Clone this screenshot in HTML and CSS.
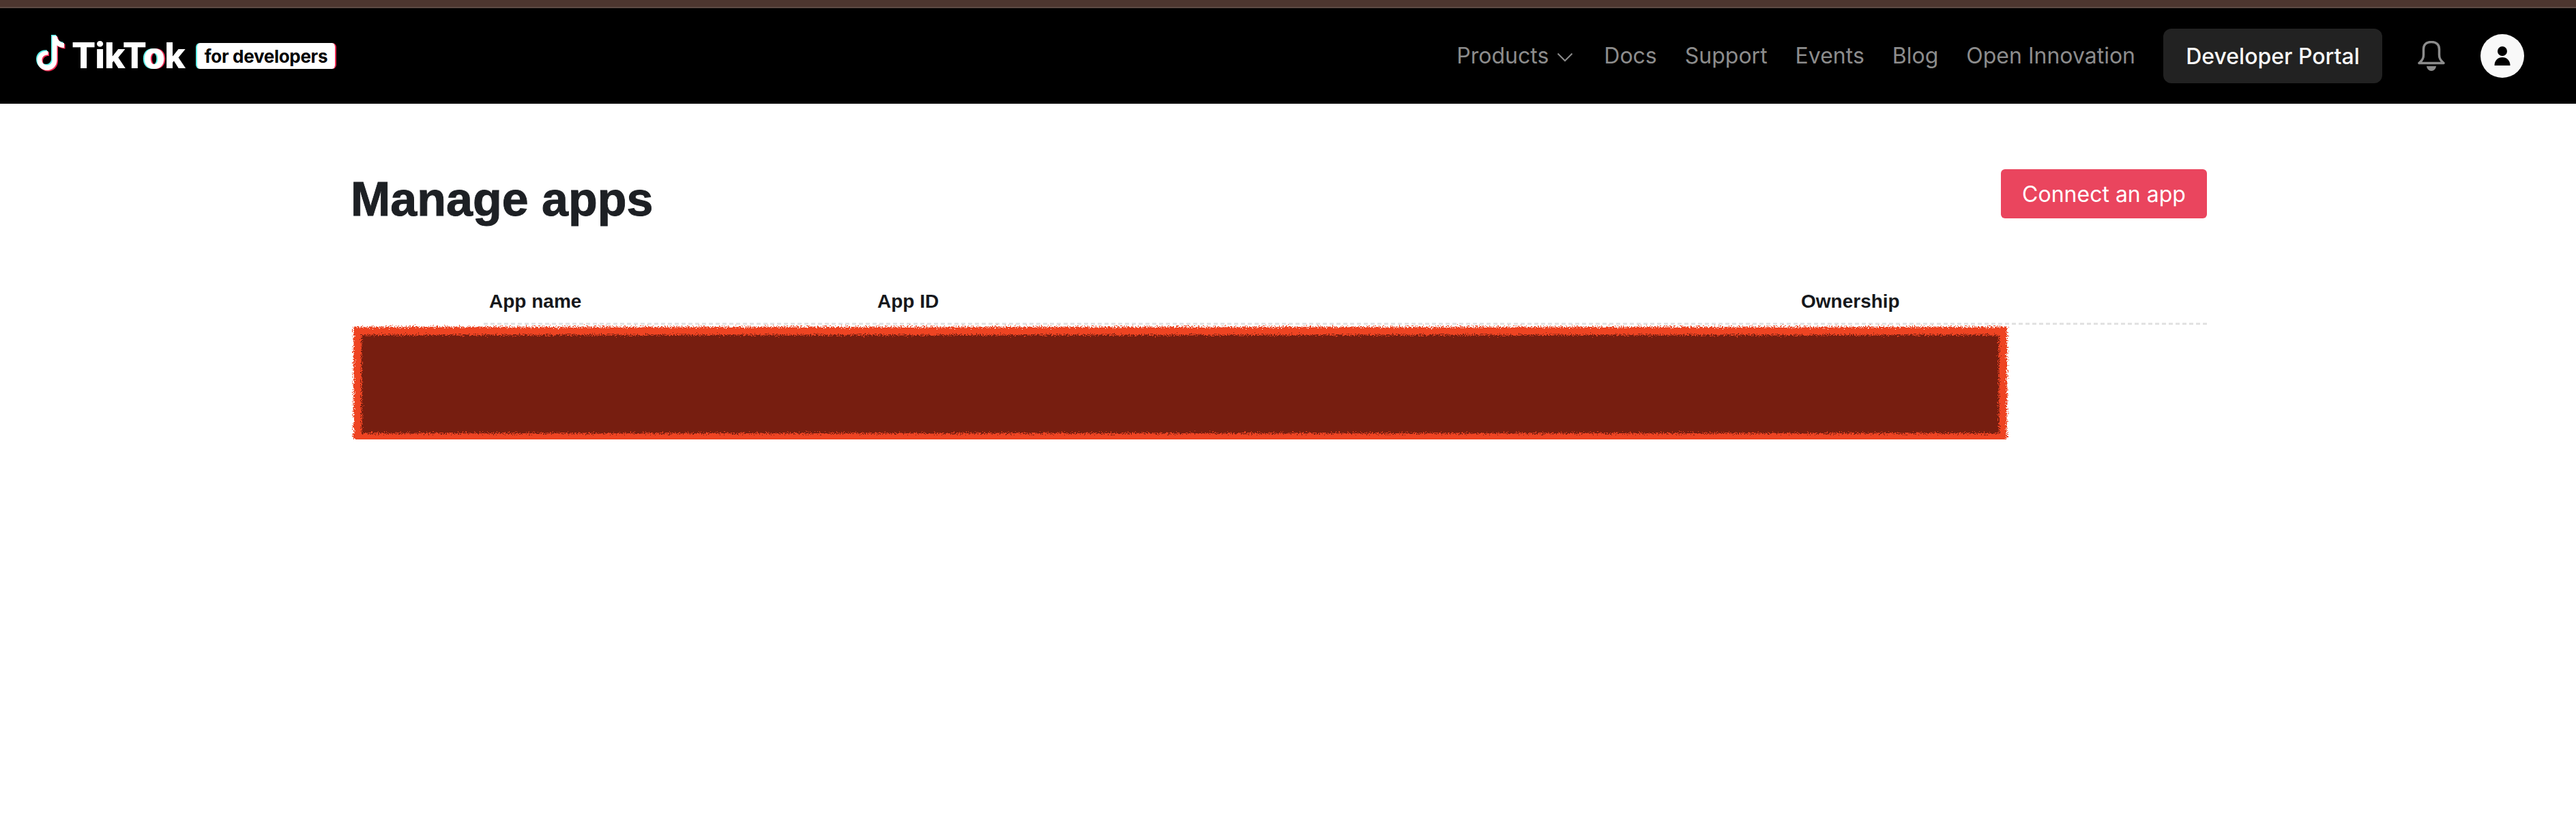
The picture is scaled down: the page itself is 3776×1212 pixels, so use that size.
FILE: index.html
```html
<!DOCTYPE html>
<html lang="en">
<head>
    <meta charset="UTF-8">
    <meta name="viewport" content="width=device-width, initial-scale=1.0">
    <title>Manage apps | TikTok for Developers</title>
    <link rel="stylesheet" href="styles.css">
</head>
<body>

    <div class="top-strip"></div>

    <header class="site-header">
        <a class="logo" href="#">
            <svg class="logo-note" viewBox="0 0 48 56" width="48" height="56">
                <path class="note-cyan" d="M19 22.500v5.500c-4-.6-9 1.800-9 7.500 0 4.500 3.500 7.500 7.500 7.500 4.500 0 7.500-3.500 7.500-7.500V0h7c.5 6 4.500 10 10.500 10.500v7c-4 0-7.500-1.200-10.500-3.500v21.500C32 44 25.500 50.500 17.500 50.500 9 50.500 3 44 3 35.500 3 27 10.500 21 19 22.500z"/>
                <path class="note-red" d="M22 25.500v5.500c-4-.6-9 1.800-9 7.500 0 4.500 3.500 7.500 7.500 7.500 4.500 0 7.500-3.500 7.500-7.500V3h7c.5 6 4.500 10 10.500 10.500v7c-4 0-7.500-1.200-10.500-3.500v21.500C35 47 28.500 53.500 20.500 53.500 12 53.500 6 47 6 38.500 6 30 13.500 24 22 25.500z"/>
                <path class="note-white" d="M20.500 24v5.500c-4-.6-9 1.800-9 7.500 0 4.500 3.500 7.500 7.500 7.500 4.500 0 7.500-3.500 7.500-7.500V1.500h7c.5 6 4.500 10 10.500 10.500v7c-4 0-7.500-1.200-10.500-3.500V37C33.500 45.500 27 52 19 52 10.500 52 4.500 45.500 4.500 37 4.500 28.500 12 22.500 20.500 24z"/>
            </svg>
            <span class="logo-word">TikT<span class="logo-o">o</span>k</span>
            <span class="logo-badge">for developers</span>
        </a>

        <nav class="main-nav">
            <a href="#">Products
                <svg class="chevron" viewBox="0 0 24 14" width="24" height="14"><path d="M1.500 1.500 12 12 22.500 1.500"/></svg>
            </a>
            <a href="#">Docs</a>
            <a href="#">Support</a>
            <a href="#">Events</a>
            <a href="#">Blog</a>
            <a href="#">Open Innovation</a>
        </nav>

        <a class="portal-btn" href="#">Developer Portal</a>

        <svg class="bell" viewBox="0 0 42 44" width="42" height="44">
            <path d="M3 32.500h36c-3-3-6.500-5-6.500-12V12C32.500 5 27.500 1.500 21 1.500S9.500 5 9.500 12v8.500c0 7-3.500 9-6.500 12z"/>
            <path class="bell-clapper" d="M14 37h14c-.5 4-3.500 7-7 7s-6.500-3-7-7z"/>
        </svg>

        <div class="avatar">
            <svg viewBox="0 0 24 28" width="24" height="28">
                <circle cx="12" cy="7" r="7"/>
                <path d="M.5 28C.5 20.500 5.500 16 12 16s11.500 4.500 11.500 12z"/>
            </svg>
        </div>
    </header>

    <main class="content">
        <div class="page-head">
            <h1>Manage apps</h1>
            <button class="connect-btn">Connect an app</button>
        </div>

        <div class="apps-table">
            <div class="table-head">
                <div class="col-name">App name</div>
                <div class="col-id">App ID</div>
                <div class="col-owner">Ownership</div>
            </div>
            <div class="table-body">
                <div class="redacted"></div>
            </div>
        </div>
    </main>

    <!-- rough edge on the blacked out row -->
    <svg class="filters" width="0" height="0">
        <filter id="rough" x="-2%" y="-10%" width="104%" height="120%" color-interpolation-filters="sRGB">
            <feTurbulence type="fractalNoise" baseFrequency="0.6" numOctaves="2" seed="4"/>
            <feDisplacementMap in="SourceGraphic" scale="12" xChannelSelector="R" yChannelSelector="G"/>
        </filter>
    </svg>

</body>
</html>
```

FILE: styles.css
```css
/* styles CSS */
body {
    font-family: Inter, "Liberation Sans", sans-serif;
    background-color: #fff;
    margin: 0;
    padding: 0;
}

a {
    text-decoration: none;
}

.top-strip {
    height: 10px;
    background-color: #4d362f;
    border-bottom: 2px solid #5d4a44;
}

/* header */
.site-header {
    display: flex;
    align-items: center;
    height: 140px;
    background-color: #000;
    padding: 0 76px 0 50px;
}

.logo {
    display: flex;
    align-items: center;
    margin-right: auto;
}

.logo-note {
    margin-right: 7px;
    margin-top: -6px;
}

.note-cyan {
    fill: #5cf0ea;
}

.note-red {
    fill: #ee2a50;
}

.note-white {
    fill: #fff;
}

.logo-word {
    width: 170px;
    margin-right: 12px;
    color: #fff;
    font-size: 52px;
    font-weight: 800;
    line-height: 38px;
    letter-spacing: -1px;
}

.logo-o {
    text-shadow: -2px 0 #5cf0ea, 2px 0 #ee2a50;
}

.logo-badge {
    display: flex;
    align-items: center;
    justify-content: center;
    width: 206px;
    height: 38px;
    box-sizing: border-box;
    background-color: #fff;
    border-radius: 6px;
    border-left: 2px solid #5cf0ea;
    border-right: 2px solid #ee2a50;
    color: #000;
    font-size: 26px;
    font-weight: 700;
    letter-spacing: -.3px;
}

.main-nav {
    display: flex;
    align-items: center;
    gap: 41px;
    margin-right: 41px;
    padding-bottom: 2px;
}

.main-nav a {
    display: flex;
    align-items: center;
    gap: 12px;
    color: #8c8c8c;
    font-size: 32px;
}

.chevron {
    fill: none;
    stroke: #8c8c8c;
    stroke-width: 2;
    margin-top: 6px;
    margin-right: 4px;
}

.portal-btn {
    display: flex;
    align-items: center;
    justify-content: center;
    width: 321px;
    height: 80px;
    background-color: #222;
    border-radius: 12px;
    color: #f8f8f8;
    font-size: 32px;
    font-weight: 500;
    margin-right: 51px;
}

.bell {
    fill: none;
    stroke: #8c8c8c;
    stroke-width: 3.500;
    stroke-linejoin: round;
    margin-right: 51px;
}

.bell-clapper {
    fill: #8c8c8c;
    stroke: none;
}

.avatar {
    display: flex;
    align-items: center;
    justify-content: center;
    width: 64px;
    height: 64px;
    border-radius: 50%;
    background-color: #f8f8f8;
}

.avatar svg {
    fill: #000;
}

/* main part */
.content {
    width: 2717px;
    margin-left: 518px;
}

.page-head {
    display: flex;
    justify-content: space-between;
    align-items: flex-start;
    padding-top: 96px;
}

h1 {
    margin: 2px 0 0 -4px;
    color: #1d2024;
    font-family: "Liberation Sans", sans-serif;
    font-size: 70px;
    font-weight: 700;
    line-height: 84px;
    -webkit-text-stroke: 1px #1d2024;
}

.connect-btn {
    width: 302px;
    height: 72px;
    background-color: #ea455e;
    color: #fff;
    border: none;
    border-radius: 6px;
    font-family: inherit;
    font-size: 32px;
    cursor: pointer;
}

.apps-table {
    position: relative;
    margin-top: 90px;
}

.table-head {
    display: flex;
    margin-left: 189px;
    padding: 0 10px 16px;
    background-image: repeating-linear-gradient(to left, #e2e2e2 0, #e2e2e2 6px, transparent 6px, transparent 10px);
    background-size: 100% 3px;
    background-position: bottom;
    background-repeat: no-repeat;
    color: #16181c;
    font-family: "Liberation Sans", sans-serif;
    font-size: 28px;
    font-weight: 700;
    line-height: 36px;
}

.col-name {
    width: 569px;
}

.col-id {
    width: 1354px;
}

.table-body {
    height: 168px;
}

.redacted {
    position: absolute;
    left: 0;
    top: 55px;
    width: 2400px;
    height: 144px;
    background-color: #771e10;
    border: 12px solid #ee4422;
    filter: url(#rough);
}

.filters {
    position: absolute;
}
```
